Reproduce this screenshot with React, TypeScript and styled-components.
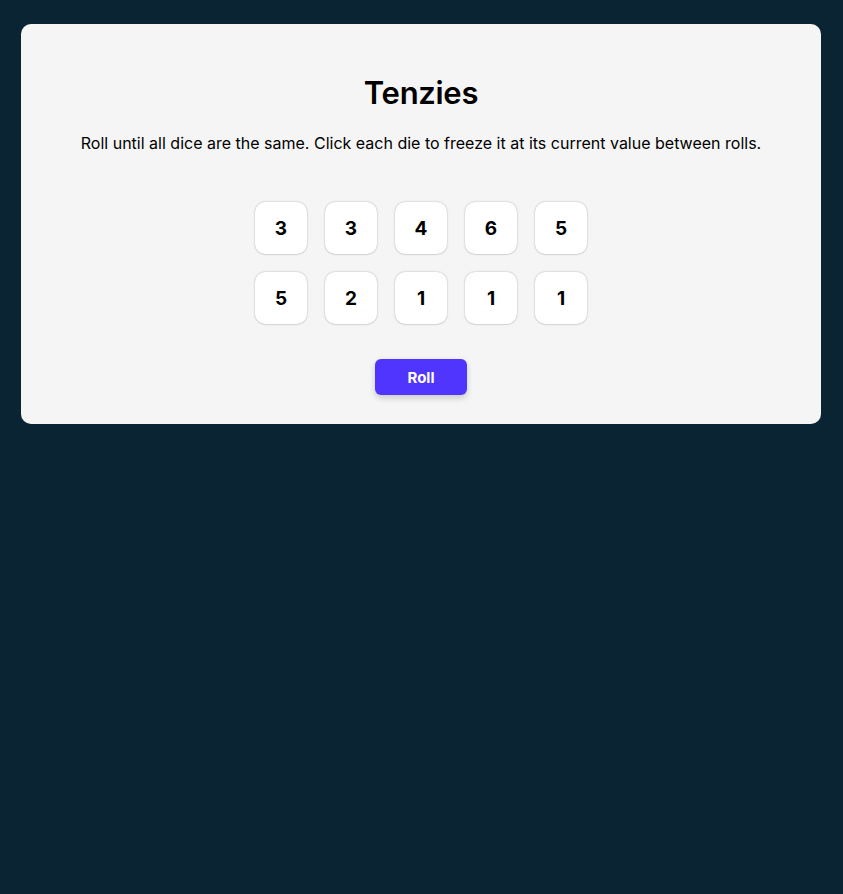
import React, { useState } from "react";
import styled, { createGlobalStyle } from "styled-components";

//types
type DieType = { id: number; value: number; held: boolean };

const startValues = [3, 3, 4, 6, 5, 5, 2, 1, 1, 1];

export default function App() {
  const [dice, setDice] = useState<DieType[]>(
    startValues.map((value, id) => ({ id, value, held: false }))
  );

  function rollDice() {
    setDice((old) =>
      old.map((die) =>
        die.held ? die : { ...die, value: Math.ceil(Math.random() * 6) }
      )
    );
  }

  function holdDie(id: number) {
    setDice((old) =>
      old.map((die) => (die.id === id ? { ...die, held: !die.held } : die))
    );
  }

  return (
    <>
      <GlobalStyle />
      <Main>
        <Title>Tenzies</Title>
        <Instructions>
          Roll until all dice are the same. Click each die to freeze it at its
          current value between rolls.
        </Instructions>
        <DiceGrid>
          {dice.map((die) => (
            <Die key={die.id} $held={die.held} onClick={() => holdDie(die.id)}>
              {die.value}
            </Die>
          ))}
        </DiceGrid>
        <RollButton onClick={rollDice}>Roll</RollButton>
      </Main>
    </>
  );
}

//styles
const GlobalStyle = createGlobalStyle`
  html, body {
    margin: 0;
    padding: 0;
    background: #0b2434;
  }
  body {
    font-family: Inter, "Noto Sans", sans-serif;
  }
`;

const Main = styled.main`
  box-sizing: border-box;
  width: 800px;
  height: 400px;
  margin: 24px 0 0 21px;
  padding-top: 49px;
  background: #f5f5f5;
  border-radius: 10px;
  display: flex;
  flex-direction: column;
  align-items: center;
`;

const Title = styled.h1`
  margin: 0;
  font-size: 31px;
  line-height: 40px;
  font-weight: 600;
  letter-spacing: -0.3px;
  color: #000;
`;

const Instructions = styled.p`
  margin: 20px 0 0;
  font-size: 16px;
  line-height: 20px;
  color: #000;
  text-align: center;
`;

const DiceGrid = styled.div`
  margin-top: 49px;
  display: grid;
  grid-template-columns: repeat(5, 52px);
  grid-auto-rows: 52px;
  gap: 18px;
`;

const Die = styled.button<{ $held: boolean }>`
  box-sizing: border-box;
  width: 52px;
  height: 52px;
  border: none;
  border-radius: 10px;
  background: ${(p) => (p.$held ? "#59e391" : "#ffffff")};
  box-shadow: 0 0 2px rgba(0, 0, 0, 0.3), 0 1px 1px rgba(0, 0, 0, 0.06);
  font-family: Inter, "Noto Sans", sans-serif;
  font-size: 19px;
  font-weight: 700;
  color: #000;
  cursor: pointer;
  padding: 0;
`;

const RollButton = styled.button`
  margin-top: 35px;
  width: 92px;
  height: 36px;
  border: none;
  border-radius: 6px;
  background: #5035ff;
  color: #fff;
  font-family: Inter, "Noto Sans", sans-serif;
  font-size: 15px;
  font-weight: 700;
  box-shadow: 0 3px 6px rgba(0, 0, 0, 0.18);
  cursor: pointer;
`;
